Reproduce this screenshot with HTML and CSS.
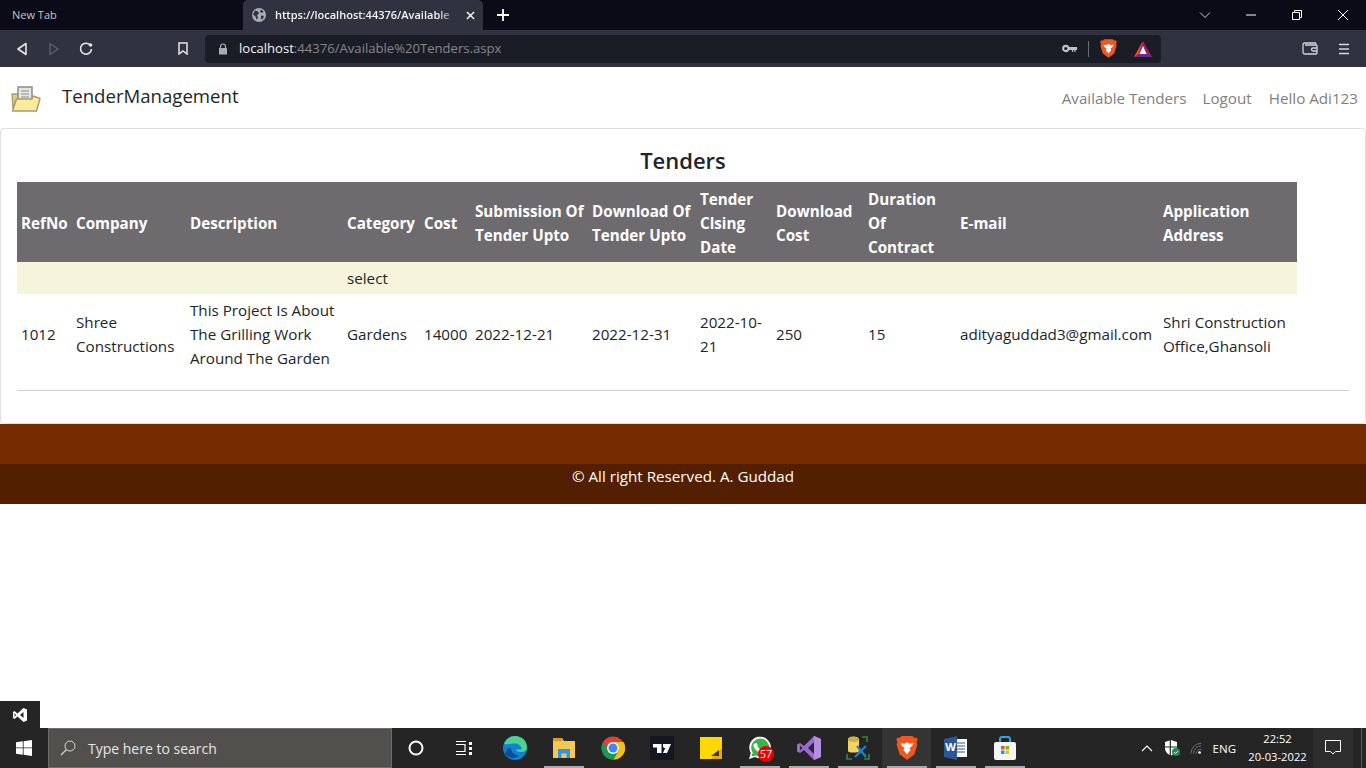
FILE: index.html
```html
<!DOCTYPE html>
<html lang="en">
<head>
<meta charset="utf-8">
<title>Available Tenders</title>
<link rel="stylesheet" href="styles.css">
</head>
<body>
<div class="screen">
  <div class="tabstrip">
    <div class="tab-inactive">New Tab</div>
    <div class="tab-active">
      <svg class="globe" viewBox="0 0 14 14"><circle cx="7" cy="7" r="7" fill="#a9abb3"/><path d="M3 2.500l3 1 1 2-2 1.500 1 3-1.500 1.500-1-3-2.500-2zM9 1.500l2.500 2-1.500 1.500-2-1zM9 7.500l3 .5-1.500 3.500-1.500-1z" fill="#30333f"/></svg>
      <span class="tab-title">https://localhost:44376/Available</span>
      <svg class="tab-x" viewBox="0 0 10 10"><path d="M1 1l8 8M9 1l-8 8" stroke="#fff" stroke-width="1.500"/></svg>
    </div>
    <svg class="newtab" viewBox="0 0 12 12"><path d="M6 0v12M0 6h12" stroke="#fff" stroke-width="1.800"/></svg>
    <div class="grow"></div>
    <svg class="winbtn chev" viewBox="0 0 12 12"><path d="M1 3.500l5 5 5-5" fill="none" stroke="#c9cad0" stroke-width="1"/></svg>
    <svg class="winbtn" viewBox="0 0 12 12"><path d="M1 6h10" stroke="#fff" stroke-width="1"/></svg>
    <svg class="winbtn" viewBox="0 0 12 12"><path d="M1.500 3.500h7v7h-7zM3.500 3.500v-2h7v7h-2" fill="none" stroke="#fff" stroke-width="1"/></svg>
    <svg class="winbtn" viewBox="0 0 12 12"><path d="M1 1l10 10M11 1l-10 10" stroke="#fff" stroke-width="1"/></svg>
  </div>
  <div class="toolbar">
    <svg class="tool back" viewBox="0 0 12 14"><path d="M10 1.500v11l-8-5.500z" fill="none" stroke="#e4e5e9" stroke-width="1.600" stroke-linejoin="round"/></svg>
    <svg class="tool fwd" viewBox="0 0 12 14"><path d="M2 1.500v11l8-5.500z" fill="none" stroke="#5d6069" stroke-width="1.400" stroke-linejoin="round"/></svg>
    <svg class="tool reload" viewBox="0 0 14 14"><path d="M11.500 3.500a5.500 5.500 0 1 0 1 3.500" fill="none" stroke="#e4e5e9" stroke-width="1.600"/><circle cx="11.500" cy="3" r="1.800" fill="#e4e5e9"/></svg>
    <svg class="tool bookmark" viewBox="0 0 10 13"><path d="M1 1h8v11l-4-3-4 3z" fill="none" stroke="#e4e5e9" stroke-width="1.500"/></svg>
    <div class="urlbar">
      <svg class="lock" viewBox="0 0 10 12"><path d="M2.500 5V3.500a2.500 2.500 0 0 1 5 0V5" fill="none" stroke="#a9abb3" stroke-width="1.200"/><rect x="1" y="5" width="8" height="6.500" fill="#a9abb3"/></svg>
      <span class="url"><span class="url-host">localhost</span>:44376/Available%20Tenders.aspx</span>
      <div class="grow"></div>
      <svg class="key" viewBox="0 0 16 9"><circle cx="4" cy="4.500" r="2.800" fill="none" stroke="#bfc1c7" stroke-width="2.200"/><path d="M7 3h9v3h-1.500v2h-1.500v-2h-1v2h-1.500v-2h-3.500z" fill="#bfc1c7"/></svg>
      <span class="url-sep"></span>
      <svg class="brave-s" viewBox="0 0 20 22"><path d="M5 0h10l1.500 1.700 2.500-.2.800 2-1 2 .7 2.500-2.800 9L12 20.500 10 22l-2-1.500L3.300 17 .5 8l.7-2.500-1-2 .8-2 2.500.2z" fill="#f1561f"/><path d="M4 6.500l3.500.5L10 5.800l2.500 1.200 3.500-.5-1.300 2.700-2.400 1.800 1 2-1.300 1.200L10 17l-2-2.800L6.700 13l1-2-2.400-1.800z" fill="#fff"/></svg>
      <svg class="bat" viewBox="0 0 18 16"><path d="M9 0l9 16H0z" fill="#9e1f63"/><path d="M0 16l4.500-3h9l4.500 3z" fill="#662d91"/><path d="M9 0L0 16l4.500-3z" fill="#ff5000"/><path d="M9 5l3.500 8h-7z" fill="#fff"/></svg>
    </div>
    <svg class="wallet" viewBox="0 0 16 13"><path d="M14 3V2a1 1 0 0 0-1-1H2.500A1.500 1.500 0 0 0 1 2.500v8A1.500 1.500 0 0 0 2.500 12H14a1 1 0 0 0 1-1V4a1 1 0 0 0-1-1H3M15 6h-4a1.500 1.500 0 0 0 0 3h4" fill="none" stroke="#d5d6da" stroke-width="1.300"/></svg>
    <svg class="menu" viewBox="0 0 10 12"><path d="M0 1.500h10M0 6h10M0 10.500h10" stroke="#d5d6da" stroke-width="1.600"/></svg>
  </div>

  <nav class="navbar">
    <svg class="logo" viewBox="0 0 30 26">
      <path d="M1 8h6v6h-2l-3 9z" fill="#e4cc6e" stroke="#a69a74" stroke-width="1.300"/>
      <path d="M7 1h14v15H7z" fill="#e6e6e2" stroke="#8d8d86" stroke-width="1.500"/>
      <path d="M10 5h8M10 8h8M10 11h8" stroke="#8f8f88" stroke-width="1.100"/>
      <path d="M1.500 25l4-12H21l1-3 7 2.500-3.500 12.500z" fill="#fdeb9c" stroke="#a69a74" stroke-width="1.400" stroke-linejoin="round"/>
    </svg>
    <a class="brand">TenderManagement</a>
    <div class="grow"></div>
    <a class="navlink">Available Tenders</a>
    <a class="navlink">Logout</a>
    <a class="navlink navlink-last">Hello Adi123</a>
  </nav>

  <main class="card">
    <h2 class="title">Tenders</h2>
    <table class="grid">
      <colgroup>
        <col class="c1"><col class="c2"><col class="c3"><col class="c4"><col class="c5"><col class="c6"><col class="c7"><col class="c8"><col class="c9"><col class="c10"><col class="c11"><col class="c12">
      </colgroup>
      <thead>
        <tr>
          <th>RefNo</th><th>Company</th><th>Description</th><th>Category</th><th>Cost</th><th>Submission Of Tender Upto</th><th>Download Of Tender Upto</th><th>Tender Clsing Date</th><th>Download Cost</th><th>Duration Of Contract</th><th>E-mail</th><th>Application Address</th>
        </tr>
      </thead>
      <tbody>
        <tr class="row-select">
          <td></td><td></td><td></td><td>select</td><td></td><td></td><td></td><td></td><td></td><td></td><td></td><td></td>
        </tr>
        <tr class="row-data">
          <td>1012</td><td>Shree Constructions</td><td>This Project Is About The Grilling Work Around The Garden</td><td>Gardens</td><td>14000</td><td>2022-12-21</td><td>2022-12-31</td><td>2022-10-21</td><td>250</td><td>15</td><td>adityaguddad3@gmail.com</td><td>Shri Construction Office,Ghansoli</td>
        </tr>
      </tbody>
    </table>
    <hr class="rule">
  </main>

  <div class="footer-top"></div>
  <footer class="footer-bottom">© All right Reserved. A. Guddad</footer>

  <div class="grow"></div>
  <div class="vsbar">
    <svg class="vsicon" viewBox="0 0 16 16"><path d="M11.500 1L15 2.500v11L11.500 15 5.500 9.500 2.500 12 1 11V5l1.500-1 3 2.500zM11.500 5L8 8l3.500 3zM2.500 6v4L4 8z" fill="#fff" fill-rule="evenodd"/></svg>
  </div>
  <div class="taskbar">
    <div class="start"><svg class="winlogo" viewBox="0 0 16 16"><path d="M0 2.300L6.800 1.300V7.500H0zM7.600 1.200L16 0v7.500H7.600zM0 8.300h6.800v6.400L0 13.700zM7.600 8.300H16V16l-8.400-1.200z" fill="#fff"/></svg></div>
    <div class="search">
      <svg class="search-ic" viewBox="0 0 16 16"><circle cx="10" cy="6" r="5" fill="none" stroke="#d5d5d2" stroke-width="1"/><path d="M6.500 9.500L1 15" stroke="#d5d5d2" stroke-width="1.200"/></svg>
      <span>Type here to search</span>
    </div>
    <div class="tb-icons">
      <div class="tb tb-sys"><svg class="ic16" viewBox="0 0 16 16"><circle cx="8" cy="8" r="6.500" fill="none" stroke="#fff" stroke-width="2"/></svg></div>
      <div class="tb tb-sys tb-last-sys"><svg class="ic18" viewBox="0 0 18 16"><path d="M1 1.500h10M1 14.500h10M1 4.500h9v7H1" fill="none" stroke="#fff" stroke-width="1.200"/><path d="M14 2h3v3h-3zM14 7h3v3h-3zM14 12h3v3h-3z" fill="#fff"/></svg></div>
      <div class="tb">
        <svg class="ic24" viewBox="0 0 24 24"><circle cx="12" cy="12" r="12" fill="#1181d3"/><path d="M1 8C3 3 7 0 12 0c7 0 12 5 12 11.500 0 3-2.500 4.500-6 4.500-3 0-5-1-5-2.500h5.500c.5-3-2.500-6-6.500-6C7 7.500 4 9 1 8z" fill="#4ed38e"/><path d="M8 12c0 4 3 7 8 7.500-3 3-10 4-14-1.500 1-4 3-6 6-6z" fill="#0a4f96"/></svg>
      </div>
      <div class="tb on"><svg class="ic24" viewBox="0 0 24 22"><path d="M1 1h9l2 3h11v17H1z" fill="#f2c955"/><path d="M1 1h9l2 3H1z" fill="#d99a28"/><path d="M6 12h12v9h-3.500v-4.500h-5V21H6z" fill="#2f97e0"/></svg></div>
      <div class="tb"><svg class="ic24" viewBox="0 0 24 24"><circle cx="12" cy="12" r="11.500" fill="#db4437"/><path d="M12 6h10.500a11.500 11.500 0 0 1-10 17.500l5-9a6 6 0 0 0-5.500-8.500z" fill="#f4c20d"/><path d="M2 6.500A11.500 11.500 0 0 0 12.500 23.500l5-9-10.500 0z" fill="#0f9d58"/><circle cx="12" cy="12" r="6" fill="#fff"/><circle cx="12" cy="12" r="4.500" fill="#4285f4"/></svg></div>
      <div class="tb"><svg class="ic24" viewBox="0 0 24 24"><rect width="24" height="24" fill="#131722"/><path d="M3 8h8.500v9H7v-5.500H3zM13 8h8l-4 9h-4l2.300-5a2 2 0 0 1-2.300-2z" fill="#fff"/></svg></div>
      <div class="tb"><svg class="ic22" viewBox="0 0 22 22"><path d="M0 0h22v22H0z" fill="#ffd800"/><path d="M22 11v11H11z" fill="#eaa800"/><path d="M19 13v6h-8z" fill="#3c3a32"/></svg></div>
      <div class="tb on"><svg class="ic24" viewBox="0 0 24 24"><path d="M1 23l1.800-6A10.800 10.800 0 1 1 7 21z" fill="#fff"/><path d="M3.500 20.500l1.200-4A9 9 0 1 1 8 19.500z" fill="#3bb54a"/><path d="M8 7c2 0 1 3 2 4 1 1.500 2 2 3.500 3 1-1 2-1 3 0 1 2-1 3-3 3-5-1-8-5-8-8 0-1 1.500-2 2.500-2z" fill="#fff"/></svg><span class="badge">57</span></div>
      <div class="tb on"><svg class="ic24" viewBox="0 0 24 24"><path d="M17 0l7 3v18l-7 3L7 14l-4 3-3-1.500v-7L3 7l4 3z" fill="#9b6bd0"/><path d="M17 0v24l7-3V3z" fill="#b48fe0"/><path d="M17 6l-6 6 6 6z" fill="#2d2540"/><path d="M3 9.500v5l2.500-2.500z" fill="#2d2540"/></svg></div>
      <div class="tb on"><svg class="ic24" viewBox="0 0 24 24"><path d="M2 3.500c0-4 11-4 11 0V15c0 2-11 2-11 0z" fill="#f4d35e"/><ellipse cx="7.500" cy="3.500" rx="5.500" ry="2.500" fill="#c9b04a"/><path d="M16 1h5v5M1 18v5h5M18 23h5v-5" fill="none" stroke="#2e8b3d" stroke-width="1.600"/><path d="M9 21l11-11M11 10l9 11" stroke="#1f7fd0" stroke-width="2.200"/></svg></div>
      <div class="tb on active"><svg class="ic24" viewBox="0 0 20 22"><path d="M5 0h10l1.500 1.700 2.500-.2.800 2-1 2 .7 2.500-2.800 9L12 20.500 10 22l-2-1.500L3.300 17 .5 8l.7-2.500-1-2 .8-2 2.500.2z" fill="#f1561f"/><path d="M4 6.500l3.500.5L10 5.800l2.500 1.200 3.500-.5-1.300 2.700-2.400 1.800 1 2-1.300 1.200L10 17l-2-2.800L6.700 13l1-2-2.400-1.800z" fill="#fff"/></svg></div>
      <div class="tb on"><svg class="ic24" viewBox="0 0 24 24"><path d="M10 3h13v18H10z" fill="#fff"/><path d="M13 7h8M13 10h8M13 13h8M13 16h8" stroke="#2b5797" stroke-width="1"/><path d="M0 3l13-3v24L0 21z" fill="#2b5797"/><text class="word-w" x="6.500" y="15" text-anchor="middle">W</text></svg></div>
      <div class="tb on"><svg class="ic24" viewBox="0 0 22 24"><path d="M6 6V3a2 2 0 0 1 2-2h6a2 2 0 0 1 2 2v3" fill="none" stroke="#27a9e1" stroke-width="2"/><rect y="6" width="22" height="18" rx="2" fill="#f5f5f5"/><path d="M7 10h3.500v3.500H7z" fill="#f25022"/><path d="M11.500 10H15v3.500h-3.500z" fill="#7fba00"/><path d="M7 14.500h3.500V18H7z" fill="#00a4ef"/><path d="M11.500 14.500H15V18h-3.500z" fill="#ffb900"/></svg></div>
    </div>
    <div class="grow"></div>
    <div class="tray">
      <svg class="tray-up" viewBox="0 0 12 7"><path d="M1 6l5-5 5 5" fill="none" stroke="#fff" stroke-width="1.100"/></svg>
      <svg class="shield" viewBox="0 0 16 16"><path d="M7 0l6 2v6c0 4-3 6.500-6 7.500C4 14.500 1 12 1 8V2z" fill="#fff"/><path d="M6.300 0v16M1 7h12" stroke="#252525" stroke-width="1.200"/><circle cx="12" cy="12" r="4" fill="#1b8f4b"/><path d="M10 12l1.500 1.500L14 11" fill="none" stroke="#fff"/></svg>
      <svg class="wifi" viewBox="0 0 16 14"><path d="M1 13A12 12 0 0 1 13 1M4 13a9 9 0 0 1 9-9M7 13a6 6 0 0 1 6-5" fill="none" stroke="#77777a" stroke-width="1"/><circle cx="11" cy="11.500" r="1.500" fill="#fff"/></svg>
      <span class="lang">ENG</span>
      <div class="clock"><span>22:52</span><span>20-03-2022</span></div>
      <div class="notif"><svg class="notif-ic" viewBox="0 0 16 16"><path d="M.5.500h15v11h-5L8 14l-2.500-2.500h-5z" fill="none" stroke="#fff" stroke-width="1"/></svg></div>
      <div class="peek"></div>
    </div>
  </div>
</div>
</body>
</html>
```

FILE: styles.css
```css
* { box-sizing: border-box; }
html, body { margin: 0; padding: 0; height: 768px; overflow: hidden; background: #fff; }
body { font-family: "Open Sans", "Noto Sans", sans-serif; color: #212529; }
.screen { width: 1366px; height: 768px; display: flex; flex-direction: column; }
.grow { flex: 1 1 auto; }
svg { display: block; flex: none; }

.tabstrip { height: 30px; background: #0a0b16; display: flex; align-items: center; flex: none; }
.tab-inactive { width: 243px; padding-left: 12px; padding-bottom: 1px; font-size: 11px; color: #c4c5cb; }
.tab-active { width: 240px; height: 30px; background: #30333f; border-radius: 5px 5px 0 0; display: flex; align-items: center; padding-left: 9px; }
.globe { width: 14px; height: 14px; margin-right: 9px; }
.tab-title { width: 182px; white-space: nowrap; font-size: 11px; font-weight: 600; color: #f3f3f5; padding-bottom: 1px; -webkit-mask-image: linear-gradient(to right, #000 90%, transparent 100%); mask-image: linear-gradient(to right, #000 90%, transparent 100%); }
.tab-x { width: 9px; height: 9px; margin-left: 9px; }
.newtab { width: 12px; height: 12px; margin-left: 14px; }
.winbtn { width: 12px; height: 12px; margin-right: 34px; }
.winbtn:last-child { margin-right: 17px; }

.toolbar { height: 37px; background: #30333f; display: flex; align-items: center; flex: none; }
.tool { height: 14px; }
.back { width: 12px; margin-left: 16px; }
.fwd { width: 12px; margin-left: 20px; }
.reload { width: 14px; margin-left: 19px; }
.bookmark { width: 10px; height: 13px; margin-left: 85px; }
.urlbar { width: 956px; height: 28px; margin-left: 17px; background: #1b1d26; border-radius: 4px; display: flex; align-items: center; padding-left: 13px; }
.lock { width: 10px; height: 12px; margin-right: 11px; }
.url { font-size: 13.100px; color: #84868e; white-space: nowrap; padding-bottom: 2px; }
.url-host { color: #f3f3f5; }
.key { width: 15px; height: 9px; margin-right: 11px; }
.url-sep { width: 1px; height: 16px; background: #6a6c75; margin-right: 11px; }
.brave-s { width: 17px; height: 19px; margin-right: 17px; }
.bat { width: 18px; height: 16px; margin-right: 9px; }
.wallet { width: 16px; height: 13px; margin-left: 141px; }
.menu { width: 10px; height: 12px; margin-left: 21px; }

.navbar { height: 61px; display: flex; align-items: center; flex: none; padding: 0 8px 0 11px; }
.logo { width: 30px; height: 26px; margin-top: 2px; }
.brand { font-size: 18.600px; color: #212529; margin-left: 21px; margin-top: -5px; }
.navlink { font-size: 15.200px; color: #7f7f7f; margin-left: 16px; }
.navlink-last { margin-left: 17px; }

.card { height: 296px; border: 1px solid #dfdfdf; border-radius: 4px; padding: 16px 16px 0; flex: none; }
.title { margin: 0; height: 37px; text-align: center; font-size: 22px; font-weight: 600; line-height: 31px; color: #212529; }
.grid { border-collapse: collapse; table-layout: fixed; width: 1280px; font-size: 15.200px; line-height: 24px; }
.grid th { background: #6d6b6e; color: #fff; font-weight: 700; text-align: left; padding: 5px 3px 3px 4px; height: 80px; font-size: 15.200px; }
.grid td { padding: 4px 3px 4px 4px; vertical-align: middle; color: #212529; }
.row-select td { background: #f5f5dc; height: 32px; }
.grid .row-data td { height: 81px; padding-bottom: 6px; }
.c1 { width: 55px; } .c2 { width: 114px; } .c3 { width: 157px; } .c4 { width: 77px; }
.c5 { width: 51px; } .c6 { width: 117px; } .c7 { width: 108px; } .c8 { width: 76px; }
.c9 { width: 92px; } .c10 { width: 92px; } .c11 { width: 203px; } .c12 { width: 138px; }
.rule { border: 0; border-top: 1px solid #cfcfcf; margin: 14px 0 0; }

.footer-top { height: 40px; background: #772b00; flex: none; }
.footer-bottom { height: 40px; background: #521f00; color: #fff; text-align: center; line-height: 24px; font-size: 15.200px; flex: none; }

.vsbar { width: 40px; height: 27px; background: #252525; display: flex; align-items: center; justify-content: center; flex: none; }
.vsicon { width: 16px; height: 16px; }
.taskbar { height: 40px; background: #252525; display: flex; align-items: center; flex: none; color: #fff; }
.start { width: 48px; display: flex; justify-content: center; }
.winlogo { width: 16px; height: 16px; }
.search { width: 344px; height: 40px; background: #52504d; border: 1px solid #6e6d6a; display: flex; align-items: center; padding-left: 11px; font-size: 14px; color: #e6e6e4; }
.search-ic { width: 16px; height: 16px; margin-right: 12px; }
.tb-icons { display: flex; }
.tb { width: 49px; height: 40px; display: flex; align-items: center; justify-content: center; position: relative; flex: none; }
.tb-sys { width: 48px; }
.tb-last-sys { margin-right: 2px; }
.tb.on::after { content: ""; position: absolute; left: 5px; right: 4px; bottom: 0; height: 2px; background: #a9a9a9; }
.tb.active { background: #343434; }
.ic16 { width: 16px; height: 16px; }
.ic18 { width: 18px; height: 16px; }
.ic22 { width: 22px; height: 22px; }
.ic24 { width: 24px; height: 24px; }
.badge { position: absolute; left: 23px; top: 18px; width: 16px; height: 16px; border-radius: 50%; background: #ed0000; color: #fff; font-size: 10.500px; line-height: 16px; text-align: center; }
.word-w { fill: #fff; font-size: 11px; font-weight: 700; font-family: "Open Sans", sans-serif; }
.tray { display: flex; align-items: center; }
.tray-up { width: 12px; height: 7px; margin-right: 11px; }
.shield { width: 16px; height: 16px; margin-right: 10px; }
.wifi { width: 14px; height: 13px; margin-right: 9px; }
.lang { font-size: 11.500px; margin-right: 9px; }
.clock { display: flex; flex-direction: column; align-items: center; font-size: 11.200px; line-height: 18px; width: 65px; margin-right: 3px; }
.notif { width: 40px; height: 40px; background: #2e2e2e; display: flex; align-items: center; justify-content: center; }
.notif-ic { width: 16px; height: 16px; }
.peek { width: 5px; height: 40px; border-left: 1px solid #5b5b5b; margin-left: 8px; }
```
